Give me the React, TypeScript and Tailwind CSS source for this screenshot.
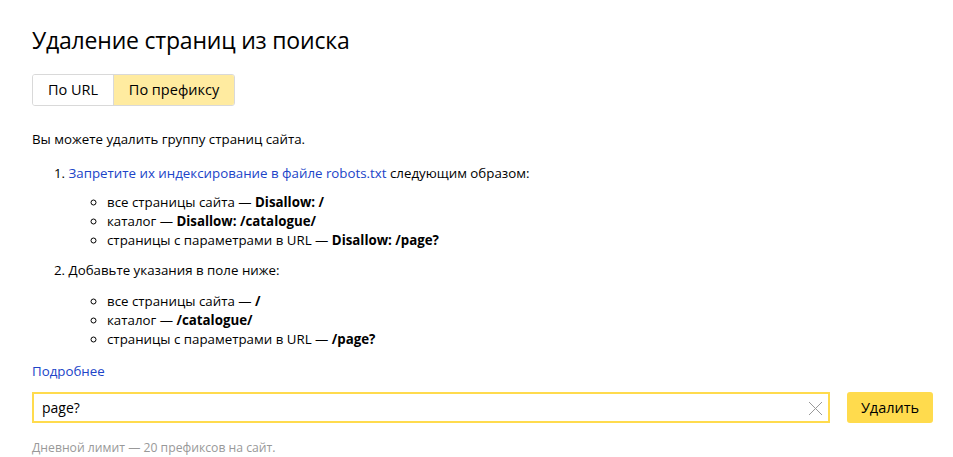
import React, { useState } from "react";

const App = () => {
  const [mode, setMode] = useState<"url" | "prefix">("prefix");
  const [value, setValue] = useState("page?");

  return (
    <div
      className="w-full min-h-screen bg-white text-[#000] pl-[32px] pr-[16px] pt-[24px]"
      style={{ fontFamily: '"Open Sans", "Noto Sans", Arial, sans-serif' }}
    >
      <h1 className="text-[23px] leading-[32px] font-normal tracking-[-0.2px] text-black">Удаление страниц из поиска</h1>

      <div className="mt-[18px] inline-flex h-[32px] rounded-[3px] border border-[#d9d9d9] text-[14.5px] overflow-hidden">
        <button
          onClick={() => setMode("url")}
          className={`w-[81px] ${mode === "url" ? "bg-[#ffeba0]" : "bg-white"} border-r border-[#d9d9d9]`}
        >
          По URL
        </button>
        <button
          onClick={() => setMode("prefix")}
          className={`w-[120px] ${mode === "prefix" ? "bg-[#ffeba0]" : "bg-white"}`}
        >
          По префиксу
        </button>
      </div>

      <div className="text-[13.3px] leading-[19px]">
        <p className="mt-[24px]">Вы можете удалить группу страниц сайта.</p>

        <ol className="mt-[15px] ml-[22px]">
          <li>
            1.{" "}
            <a href="#" className="text-[#2044c8]">
              Запретите их индексирование в файле robots.txt
            </a>{" "}
            следующим образом:
            <ul className="mt-[10px] mb-[11px] ml-[41px] list-[circle] pl-[12px]">
              <li>
                все страницы сайта — <b>Disallow: /</b>
              </li>
              <li>
                каталог — <b>Disallow: /catalogue/</b>
              </li>
              <li>
                страницы с параметрами в URL — <b>Disallow: /page?</b>
              </li>
            </ul>
          </li>
          <li>
            2. Добавьте указания в поле ниже:
            <ul className="mt-[12px] ml-[41px] list-[circle] pl-[12px]">
              <li>
                все страницы сайта — <b>/</b>
              </li>
              <li>
                каталог — <b>/catalogue/</b>
              </li>
              <li>
                страницы с параметрами в URL — <b>/page?</b>
              </li>
            </ul>
          </li>
        </ol>

        <a href="#" className="block mt-[13px] text-[#2044c8]">
          Подробнее
        </a>
      </div>

      <div className="mt-[11px] flex items-center">
        <div className="relative w-[798px] h-[31px] border-2 border-[#ffdb4d] bg-white flex items-center">
          <input
            value={value}
            onChange={(e) => setValue(e.target.value)}
            className="w-full h-full pl-[8px] pr-[30px] text-[14px] outline-none bg-transparent"
          />
          <button onClick={() => setValue("")} className="absolute right-[5px] top-[7px]">
            <svg width="15" height="15" viewBox="0 0 15 15">
              <path d="M1 1L14 14M14 1L1 14" stroke="#999" strokeWidth="1" />
            </svg>
          </button>
        </div>
        <button className="ml-[17px] w-[86px] h-[31px] rounded-[3px] bg-[#ffdb4d] text-[14.5px]">Удалить</button>
      </div>

      <p className="mt-[16px] text-[12.2px] text-[#999]">Дневной лимит — 20 префиксов на сайт.</p>
    </div>
  );
};

export default App;
